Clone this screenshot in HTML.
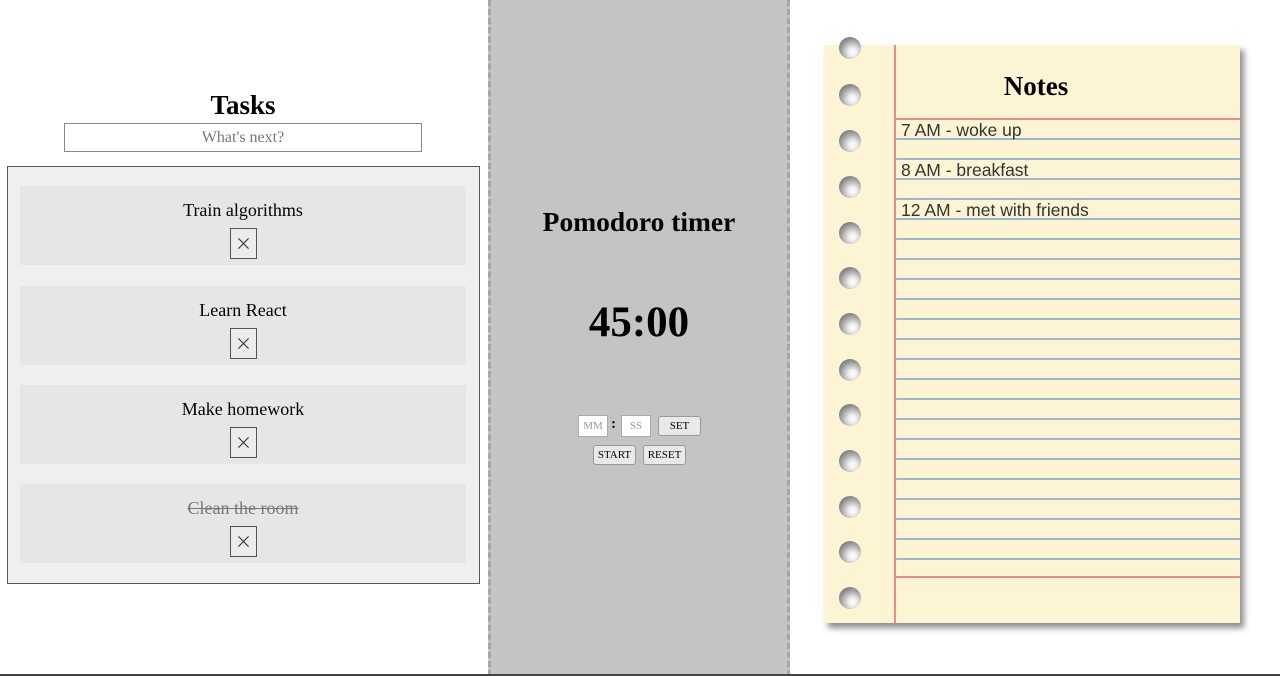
<!DOCTYPE html>
<html><head><meta charset="utf-8"><style>
*{box-sizing:border-box;margin:0;padding:0}
body{width:1280px;height:676px;position:relative;overflow:hidden;background:#fff;font-family:"Liberation Serif",serif;color:#000}
.abs{position:absolute}
.h{font-weight:bold;text-align:center;white-space:nowrap}
.item{position:absolute;left:20px;width:446px;height:79px;background:#e6e6e6;text-align:center;font-size:18px}
.item .t{position:absolute;left:0;right:0;top:14px}
.item .x{position:absolute;left:210px;top:42px;width:27px;height:31px;border:1px solid #555;background:#ececec}
.btn{position:absolute;background:#e9e9e9;border:1px solid #999;border-radius:3px;font-size:11px;text-align:center;line-height:18px}
.inp{position:absolute;background:#fff;border:1px solid #aaa;font-size:11px;color:#999;text-align:center;line-height:20px}
.hole{position:absolute;left:839px;width:22px;height:22px;border-radius:50%;background:radial-gradient(circle at 62% 68%,#fff 0%,#eee 20%,#999 60%,#555 100%)}
.note{position:absolute;left:901px;font-family:"Liberation Sans",sans-serif;font-size:17.5px;color:#333}
</style></head><body>
<div class="abs h" style="left:0;width:486px;top:90px;font-size:27px">Tasks</div>
<div class="abs" style="left:64px;top:123px;width:358px;height:29px;border:1px solid #888;text-align:center;font-size:16px;color:#777;line-height:27px">What's next?</div>
<div class="abs" style="left:7px;top:166px;width:473px;height:418px;border:1px solid #555;background:#efefef">
<div class="item" style="top:19px;left:12px"><div class="t">Train algorithms</div><svg class="x" viewBox="0 0 27 31"><path d="M8 10L19 21M19 10L8 21" stroke="#333" stroke-width="1.2"/></svg></div>
<div class="item" style="top:119px;left:12px"><div class="t">Learn React</div><svg class="x" viewBox="0 0 27 31"><path d="M8 10L19 21M19 10L8 21" stroke="#333" stroke-width="1.2"/></svg></div>
<div class="item" style="top:218px;left:12px"><div class="t">Make homework</div><svg class="x" viewBox="0 0 27 31"><path d="M8 10L19 21M19 10L8 21" stroke="#333" stroke-width="1.2"/></svg></div>
<div class="item" style="top:317px;left:12px"><div class="t" style="text-decoration:line-through;color:#777">Clean the room</div><svg class="x" viewBox="0 0 27 31"><path d="M8 10L19 21M19 10L8 21" stroke="#333" stroke-width="1.2"/></svg></div>
</div>
<div class="abs" style="left:488px;top:0;width:302px;height:676px;background:#c4c4c4;border-left:3px dashed #a6a6a6;border-right:3px dashed #a6a6a6"></div>
<div class="abs h" style="left:490px;width:298px;top:206px;font-size:27.5px">Pomodoro timer</div>
<div class="abs h" style="left:490px;width:298px;top:298px;font-size:43px">45:00</div>
<div class="inp" style="left:578px;top:415px;width:30px;height:22px">MM</div>
<div class="abs" style="left:611px;top:416px;font-weight:bold;font-size:15px">:</div>
<div class="inp" style="left:621px;top:415px;width:30px;height:22px">SS</div>
<div class="btn" style="left:658px;top:416px;width:43px;height:20px">SET</div>
<div class="btn" style="left:593px;top:445px;width:43px;height:20px">START</div>
<div class="btn" style="left:643px;top:445px;width:43px;height:20px">RESET</div>
<div class="abs" style="left:824px;top:45px;width:416px;height:578px;background:#fdf4d3;box-shadow:4px 5px 6px rgba(0,0,0,.45);overflow:hidden">
<div class="abs" style="left:70px;top:0;width:2px;height:578px;background:#f08a8a"></div>
<div class="abs" style="left:72px;top:73px;width:344px;height:2px;background:#f08a8a"></div>
<div class="abs" style="left:72px;top:93px;width:344px;height:440px;background:repeating-linear-gradient(to bottom,#9fb8d0 0,#9fb8d0 2px,transparent 2px,transparent 20px)"></div>
<div class="abs" style="left:72px;top:531px;width:344px;height:2px;background:#f08a8a"></div>
</div>
<div class="hole" style="top:37px"></div>
<div class="abs h" style="left:896px;width:280px;top:71px;font-size:27px">Notes</div>
<div class="note" style="top:120px">7 AM - woke up</div>
<div class="note" style="top:160px">8 AM - breakfast</div>
<div class="note" style="top:200px">12 AM - met with friends</div>
<div class="hole" style="top:84px"></div><div class="hole" style="top:130px"></div><div class="hole" style="top:176px"></div><div class="hole" style="top:222px"></div><div class="hole" style="top:267px"></div><div class="hole" style="top:313px"></div><div class="hole" style="top:359px"></div><div class="hole" style="top:404px"></div><div class="hole" style="top:450px"></div><div class="hole" style="top:496px"></div><div class="hole" style="top:541px"></div><div class="hole" style="top:587px"></div>
<div class="abs" style="left:0;top:674px;width:1280px;height:2px;background:#444"></div>
</body></html>
